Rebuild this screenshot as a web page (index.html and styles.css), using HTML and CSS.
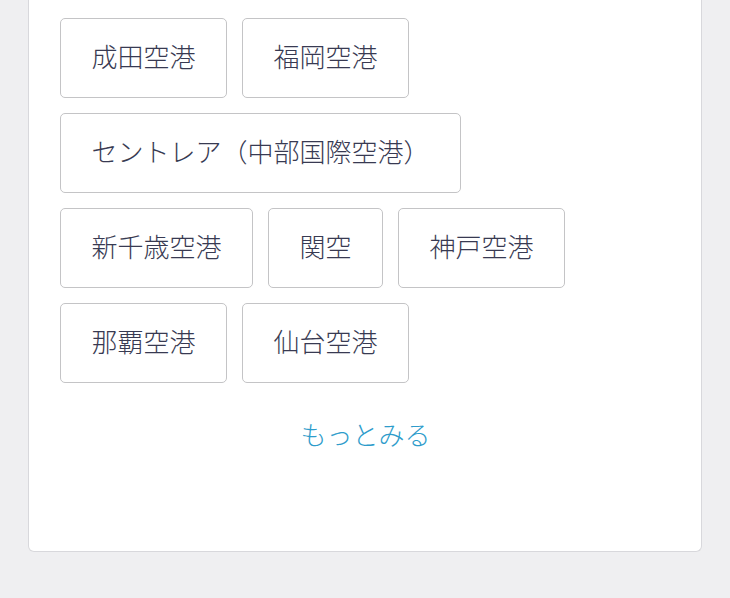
FILE: index.html
```html
<!DOCTYPE html>
<html lang="ja">
<head>
<meta charset="utf-8">
<link rel="stylesheet" href="styles.css">
</head>
<body>
<div class="card">
  <div class="tags">
    <div class="tag-row">
      <a class="tag">成田空港</a>
      <a class="tag">福岡空港</a>
    </div>
    <div class="tag-row">
      <a class="tag">セントレア（中部国際空港）</a>
    </div>
    <div class="tag-row">
      <a class="tag">新千歳空港</a>
      <a class="tag">関空</a>
      <a class="tag">神戸空港</a>
    </div>
    <div class="tag-row">
      <a class="tag">那覇空港</a>
      <a class="tag">仙台空港</a>
    </div>
  </div>
  <div class="more"><a class="more-link">もっとみる</a></div>
</div>
</body>
</html>
```
FILE: styles.css
```css
html, body {
  margin: 0;
  padding: 0;
  background: #efeff1;
}
body {
  font-family: "Noto Sans CJK JP", "Noto Sans", sans-serif;
  width: 730px;
  height: 598px;
  overflow: hidden;
}
.card {
  margin-left: 28px;
  width: 674px;
  height: 552px;
  box-sizing: border-box;
  background: #fff;
  border: 1px solid #d8d8dc;
  border-top: none;
  border-radius: 0 0 6px 6px;
  padding: 18px 30px 0 31px;
}
.tags {
  display: flex;
  flex-direction: column;
  gap: 15px;
}
.tag-row {
  display: flex;
  gap: 15px;
}
.tag {
  display: block;
  box-sizing: border-box;
  height: 80px;
  padding: 18px 30.5px 22px;
  border: 1px solid #c4c4c6;
  border-radius: 5px;
  font-size: 26px;
  font-weight: 300;
  line-height: 38px;
  color: #383a52;
  white-space: nowrap;
}
.more {
  margin-top: 32px;
  text-align: center;
  font-size: 26px;
  font-weight: 300;
  line-height: 38px;
}
.more-link {
  color: #2e9ccb;
}
```
